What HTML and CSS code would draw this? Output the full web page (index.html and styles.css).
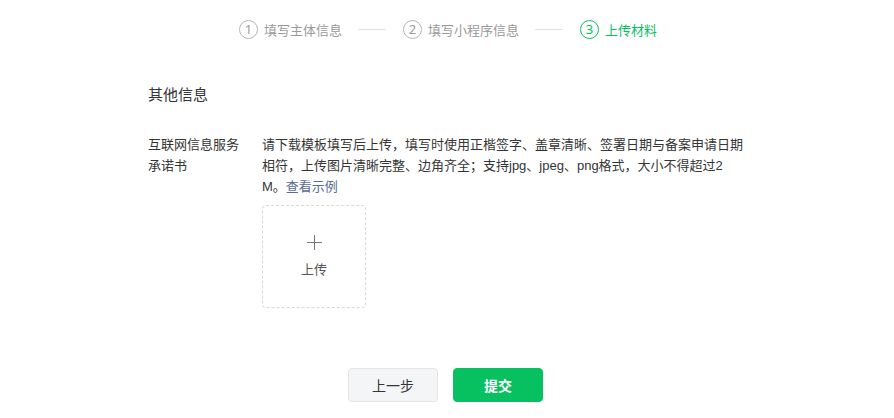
FILE: index.html
```html
<!DOCTYPE html>
<html lang="zh-CN">
<head>
<meta charset="utf-8">
<link rel="stylesheet" href="styles.css">
</head>
<body>
<div class="page">
  <div class="steps">
    <div class="step"><span class="num">1</span><span class="step-text">填写主体信息</span></div>
    <span class="step-line"></span>
    <div class="step"><span class="num">2</span><span class="step-text">填写小程序信息</span></div>
    <span class="step-line"></span>
    <div class="step active"><span class="num">3</span><span class="step-text">上传材料</span></div>
  </div>

  <div class="section">
    <h2 class="section-title">其他信息</h2>
    <div class="form-row">
      <div class="label">互联网信息服务<br>承诺书</div>
      <div class="field">
        <p class="desc">请下载模板填写后上传，填写时使用正楷签字、盖章清晰、签署日期与备案申请日期相符，上传图片清晰完整、边角齐全；支持jpg、jpeg、png格式，大小不得超过2M。<a class="link" href="#">查看示例</a></p>
        <div class="upload">
          <span class="plus"></span>
          <span class="upload-text">上传</span>
        </div>
      </div>
    </div>
  </div>

  <div class="actions">
    <button class="btn btn-default">上一步</button>
    <button class="btn btn-primary">提交</button>
  </div>
</div>
</body>
</html>
```
FILE: styles.css
```css
* { box-sizing: border-box; }
html, body { margin: 0; padding: 0; background: #fff; }
body {
  font-family: "Liberation Sans", "Noto Sans CJK SC", sans-serif;
  color: #353535;
  font-size: 13px;
}
.page { width: 894px; }
.steps {
  display: flex;
  justify-content: center;
  align-items: center;
  padding-top: 19px;
  height: 39px;
  padding-left: 2px;
}
.step {
  display: flex;
  align-items: center;
  color: #9a9a9a;
  font-size: 13px;
}
.num {
  width: 19px;
  height: 19px;
  border: 1px solid #b5b5b5;
  border-radius: 50%;
  display: flex;
  align-items: center;
  justify-content: center;
  font-size: 13px;
  line-height: 1;
  margin-right: 6px;
  color: #9a9a9a;
  font-family: "Noto Sans", sans-serif;
}
.step.active { color: #07c160; }
.step.active .num { border-color: #07c160; color: #07c160; }
.step-line {
  width: 28px;
  height: 1px;
  background: #e2e2e2;
  margin: 0 17px 0 16px;
}
.section { padding-left: 148px; padding-top: 45px; }
.section-title {
  margin: 0;
  font-size: 15px;
  font-weight: normal;
  color: #353535;
  line-height: 21px;
}
.form-row {
  display: flex;
  margin-top: 29px;
}
.label {
  width: 114px;
  line-height: 21px;
  color: #353535;
}
.field { width: 482px; }
.desc {
  margin: 0;
  line-height: 21px;
  color: #353535;
  word-break: break-all;
}
.link { color: #576b95; text-decoration: none; }
.upload {
  margin-top: 8px;
  width: 104px;
  height: 103px;
  border: 1px dashed #d9d9d9;
  border-radius: 4px;
  display: flex;
  flex-direction: column;
  align-items: center;
  justify-content: center;
}
.plus {
  position: relative;
  width: 15px;
  height: 15px;
  margin-bottom: 11px;
  margin-top: 0;
}
.plus::before, .plus::after {
  content: "";
  position: absolute;
  background: #777;
}
.plus::before { left: 0; right: 0; top: 7px; height: 1px; }
.plus::after { top: 0; bottom: 0; left: 7px; width: 1px; }
.upload-text { color: #555; font-size: 13px; line-height: 18px; }
.actions {
  display: flex;
  justify-content: center;
  gap: 15px;
  margin-top: 60px;
  padding-right: 3px;
}
.btn {
  width: 90px;
  height: 34px;
  border-radius: 4px;
  font-family: "Noto Sans CJK SC", sans-serif;
  font-size: 14px;
  cursor: pointer;
}
.btn-default {
  background: #f4f5f7;
  border: 1px solid #e3e4e6;
  color: #353535;
}
.btn-primary {
  background: #07c160;
  border: 1px solid #07c160;
  color: #fff;
  font-weight: bold;
}
```
